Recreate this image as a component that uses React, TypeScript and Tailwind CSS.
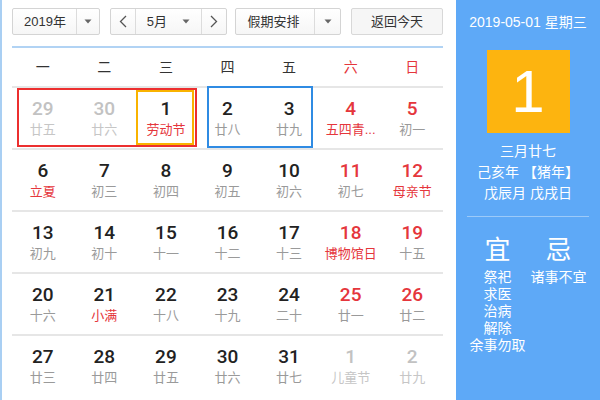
import React from "react";

type Day = { n: number; l: string; out?: boolean; redN?: boolean; redL?: boolean };

const rows: Day[][] = [
  [
    { n: 29, l: "廿五", out: true },
    { n: 30, l: "廿六", out: true },
    { n: 1, l: "劳动节", redL: true },
    { n: 2, l: "廿八" },
    { n: 3, l: "廿九" },
    { n: 4, l: "五四青...", redN: true, redL: true },
    { n: 5, l: "初一", redN: true },
  ],
  [
    { n: 6, l: "立夏", redL: true },
    { n: 7, l: "初三" },
    { n: 8, l: "初四" },
    { n: 9, l: "初五" },
    { n: 10, l: "初六" },
    { n: 11, l: "初七", redN: true },
    { n: 12, l: "母亲节", redN: true, redL: true },
  ],
  [
    { n: 13, l: "初九" },
    { n: 14, l: "初十" },
    { n: 15, l: "十一" },
    { n: 16, l: "十二" },
    { n: 17, l: "十三" },
    { n: 18, l: "博物馆日", redN: true, redL: true },
    { n: 19, l: "十五", redN: true },
  ],
  [
    { n: 20, l: "十六" },
    { n: 21, l: "小满", redL: true },
    { n: 22, l: "十八" },
    { n: 23, l: "十九" },
    { n: 24, l: "二十" },
    { n: 25, l: "廿一", redN: true },
    { n: 26, l: "廿二", redN: true },
  ],
  [
    { n: 27, l: "廿三" },
    { n: 28, l: "廿四" },
    { n: 29, l: "廿五" },
    { n: 30, l: "廿六" },
    { n: 31, l: "廿七" },
    { n: 1, l: "儿童节", out: true },
    { n: 2, l: "廿九", out: true },
  ],
];

const weekdays = ["一", "二", "三", "四", "五", "六", "日"];

function Caret() {
  return (
    <svg width="8" height="5" viewBox="0 0 8 5">
      <path d="M0.5 0.5h7L4 4.5z" fill="#666" />
    </svg>
  );
}

function Chevron({ dir }: { dir: "l" | "r" }) {
  return (
    <svg width="8" height="13" viewBox="0 0 8 13">
      <polyline
        points={dir === "l" ? "7,1 1.5,6.5 7,12" : "1,1 6.5,6.5 1,12"}
        fill="none"
        stroke="#555"
        strokeWidth="1.3"
      />
    </svg>
  );
}

function Cell({ d }: { d: Day }) {
  const numCls = d.out
    ? "text-[#c2c2c2]"
    : d.redN
    ? "text-[#e5363c]"
    : "text-[#222]";
  const lunCls = d.out
    ? "text-[#c6c6c6]"
    : d.redL
    ? "text-[#e5363c]"
    : "text-[#9a9a9a]";
  return (
    <div className="flex flex-col items-center pt-[10px]">
      <div
        className={`text-[19px] leading-[22px] font-medium ${numCls}`}
        style={{ fontFamily: 'Roboto, "Liberation Sans", sans-serif' }}
      >
        {d.n}
      </div>
      <div className={`mt-[2px] text-[13px] leading-[16px] whitespace-nowrap ${lunCls}`}>{d.l}</div>
    </div>
  );
}

export default function App() {
  return (
    <div
      className="w-[600px] h-[400px] flex bg-white border-l-2 border-[#a9cff3] overflow-hidden"
      style={{ fontFamily: '"Liberation Sans", "Noto Sans CJK SC", sans-serif' }}
    >
      <div className="w-[454px] shrink-0 pl-[10px] pr-[13px] pt-2">
        {/* controls */}
        <div className="flex h-[27px] text-[13px] text-[#333]">
          <div className="w-[88px] flex border border-[#d4d4d4] rounded-[2px] bg-gradient-to-b from-white to-[#f6f6f6]">
            <div className="w-[63px] flex items-center pl-[11px]">2019年</div>
            <div className="flex-1 flex items-center justify-center border-l border-[#dcdcdc]">
              <Caret />
            </div>
          </div>
          <div className="ml-[10px] w-[118px] flex border border-[#d4d4d4] rounded-[2px] bg-gradient-to-b from-white to-[#f6f6f6]">
            <div className="w-[25px] flex items-center justify-center border-r border-[#dcdcdc]">
              <Chevron dir="l" />
            </div>
            <div className="flex-1 flex items-center pl-[11px] pr-[11px] justify-between">
              <span>5月</span>
              <Caret />
            </div>
            <div className="w-[25px] flex items-center justify-center border-l border-[#dcdcdc]">
              <Chevron dir="r" />
            </div>
          </div>
          <div className="ml-[8px] w-[106px] flex border border-[#d4d4d4] rounded-[2px] bg-gradient-to-b from-white to-[#f6f6f6]">
            <div className="w-[78px] flex items-center pl-[11px]">假期安排</div>
            <div className="flex-1 flex items-center justify-center border-l border-[#dcdcdc]">
              <Caret />
            </div>
          </div>
          <div className="ml-[10px] w-[92px] flex items-center justify-center border border-[#d8d8d8] rounded-[2px] bg-[#f6f6f6]">
            返回今天
          </div>
        </div>
        {/* blue line */}
        <div className="mt-[11px] h-[2px] bg-[#b1d3f4]" />
        {/* weekdays */}
        <div className="grid grid-cols-7 h-[38px] items-center text-[14px]">
          {weekdays.map((w, i) => (
            <div key={w} className={`text-center ${i >= 5 ? "text-[#e5363c]" : "text-[#333]"}`}>
              {w}
            </div>
          ))}
        </div>
        {/* rows */}
        {rows.map((r, ri) => (
          <div key={ri} className="relative grid grid-cols-7 h-[62px] border-t-2 border-[#e6e6e6]">
            {r.map((d, di) => (
              <Cell key={di} d={d} />
            ))}
            {ri === 0 && (
              <>
                <div className="absolute left-[5px] top-0 w-[180px] h-[59px] border-2 border-[#ec2f2f]" />
                <div className="absolute left-[124px] top-[2px] w-[58px] h-[55px] border-2 border-[#f9b300]" />
                <div className="absolute left-[195px] top-[-2px] w-[106px] h-[62px] border-2 border-[#2f8be3]" />
              </>
            )}
          </div>
        ))}
      </div>
      {/* right panel */}
      <div className="flex-1 bg-[#5ea9f7] text-white flex flex-col">
        <div className="pt-[13px] text-[14px] leading-[18px] text-center">2019-05-01 星期三</div>
        <div className="mt-[19px] mx-auto w-[83px] h-[83px] bg-[#fdb40f] flex items-center justify-center text-[60px] leading-none">
          1
        </div>
        <div className="mt-[8px] text-[14px] leading-[21px] text-center">
          <div>三月廿七</div>
          <div>己亥年 【猪年】</div>
          <div>戊辰月 戊戌日</div>
        </div>
        <div className="mt-[12px] mx-[11px] h-px bg-[#9ccaf9]" />
        <div className="mt-[18px] px-[11px] grid grid-cols-2 text-center">
          <div>
            <div className="text-[26px] leading-[30px]">宜</div>
            <div className="mt-[4px] text-[14px] leading-[17px]">
              <div>祭祀</div>
              <div>求医</div>
              <div>治病</div>
              <div>解除</div>
              <div className="whitespace-nowrap">余事勿取</div>
            </div>
          </div>
          <div>
            <div className="text-[26px] leading-[30px]">忌</div>
            <div className="mt-[4px] text-[14px] leading-[17px]">
              <div className="whitespace-nowrap">诸事不宜</div>
            </div>
          </div>
        </div>
      </div>
    </div>
  );
}
